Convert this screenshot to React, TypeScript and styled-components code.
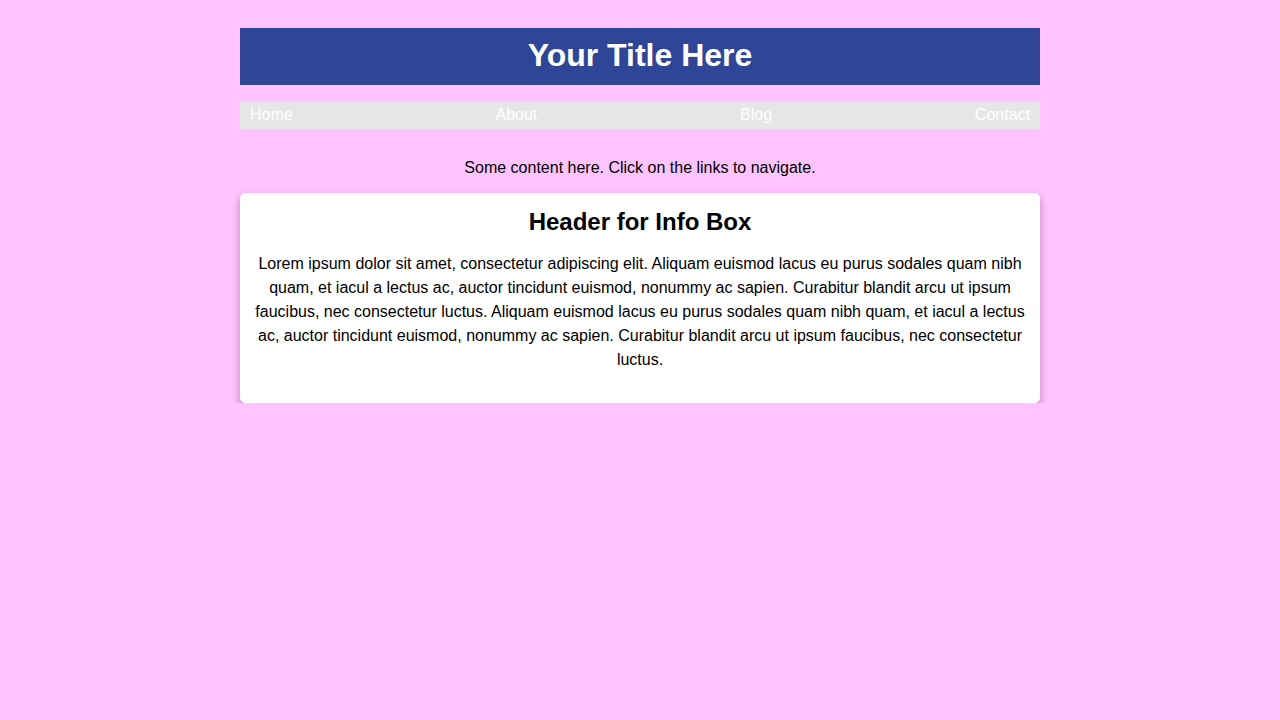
import React from "react";
import styled, { createGlobalStyle } from "styled-components";

const GlobalStyle = createGlobalStyle`
  html, body {
    margin: 0;
    padding: 0;
    background: #ffc4ff;
    font-family: "Liberation Sans", Arial, sans-serif;
    color: #000;
  }
`;

const Page = styled.div`
  width: 800px;
  margin: 0 auto;
  padding-top: 28px;
  display: flex;
  flex-direction: column;
`;

const Header = styled.header`
  background: #2f4696;
  padding: 9px 10px 11px;
  text-align: center;
  height: 57px;
  box-sizing: border-box;
  display: flex;
  align-items: center;
  justify-content: center;
`;

const Title = styled.h1`
  margin: 0;
  color: #fff;
  font-size: 32px;
  font-weight: 700;
  line-height: 37px;
`;

const Nav = styled.nav`
  margin-top: 16px;
  background: #e6e6e6;
  height: 28px;
  padding: 0 10px;
  display: flex;
  justify-content: space-between;
  align-items: center;
`;

const NavLink = styled.a`
  color: #fff;
  text-decoration: none;
  font-size: 16px;
  line-height: 18px;
`;

const Intro = styled.p`
  margin: 29px 0 16px;
  text-align: center;
  font-size: 16px;
  line-height: 19px;
`;

const InfoBox = styled.section`
  background: #fff;
  border-radius: 5px;
  box-shadow: 0 4px 8px rgba(60, 0, 60, 0.35);
  padding: 15px 15px 15px;
  text-align: center;
`;

const InfoHeader = styled.h2`
  margin: 0;
  font-size: 24px;
  font-weight: 700;
  line-height: 28px;
`;

const InfoText = styled.p`
  margin: 16px 0;
  font-size: 16px;
  line-height: 24px;
`;

export default function App() {
  return (
    <>
      <GlobalStyle />
      <Page>
        <Header>
          <Title>Your Title Here</Title>
        </Header>
        <Nav>
          <NavLink href="#">Home</NavLink>
          <NavLink href="#">About</NavLink>
          <NavLink href="#">Blog</NavLink>
          <NavLink href="#">Contact</NavLink>
        </Nav>
        <Intro>Some content here. Click on the links to navigate.</Intro>
        <InfoBox>
          <InfoHeader>Header for Info Box</InfoHeader>
          <InfoText>
            Lorem ipsum dolor sit amet, consectetur adipiscing elit. Aliquam euismod lacus eu purus sodales quam nibh
            quam, et iacul a lectus ac, auctor tincidunt euismod, nonummy ac sapien. Curabitur blandit arcu ut ipsum
            faucibus, nec consectetur luctus. Aliquam euismod lacus eu purus sodales quam nibh quam, et iacul a lectus
            ac, auctor tincidunt euismod, nonummy ac sapien. Curabitur blandit arcu ut ipsum faucibus, nec consectetur
            luctus.
          </InfoText>
        </InfoBox>
      </Page>
    </>
  );
}
